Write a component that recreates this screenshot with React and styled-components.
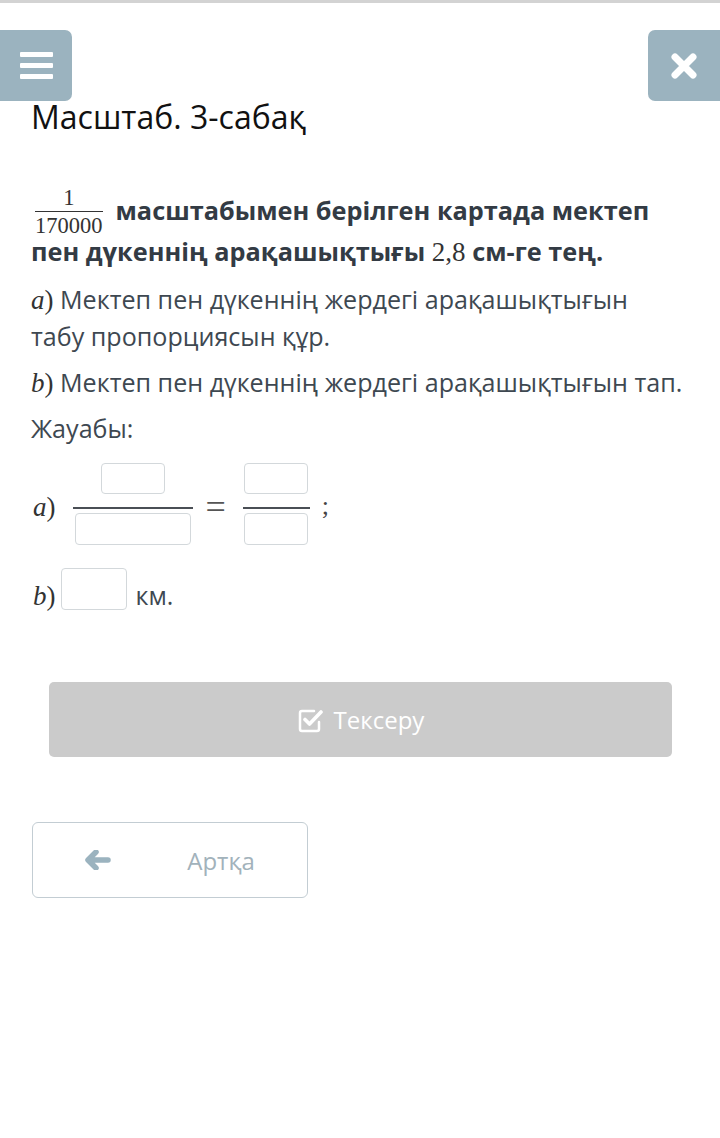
import React from 'react';
import styled, { createGlobalStyle } from 'styled-components';

const GlobalStyle = createGlobalStyle`
  body {
    margin: 0;
    padding: 0;
    background: #ffffff;
    font-family: 'Open Sans', 'Noto Sans', sans-serif;
  }

  *, *::before, *::after {
    box-sizing: border-box;
  }
`;

const Page = styled.div`
  min-height: 1138px;
  border-top: 3px solid #d3d3d3;
  background: #fff;
`;

const TopBar = styled.div`
  display: flex;
  justify-content: space-between;
  margin-top: 27px;
`;

const SideButton = styled.button`
  width: 72px;
  height: 71px;
  border: none;
  padding: 0;
  background: #9bb3bf;
  border-radius: ${p => (p.$side === 'left' ? '0 7px 7px 0' : '7px 0 0 7px')};
  display: flex;
  flex-direction: column;
  align-items: center;
  justify-content: center;
  gap: 6px;
`;

const MenuBar = styled.span`
  display: block;
  width: 33px;
  height: 5px;
  border-radius: 1px;
  background: #fff;
`;

const Content = styled.div`
  padding: 0 35px 0 31px;
`;

const Title = styled.h1`
  margin: 0;
  font-size: 32px;
  line-height: 1;
  font-weight: 400;
  color: #111;
`;

const Lead = styled.p`
  margin: 54px 0 0;
  font-size: 25.3px;
  line-height: 41px;
  font-weight: 700;
  color: #333b44;
`;

const Fraction = styled.span`
  display: inline-flex;
  flex-direction: column;
  align-items: stretch;
  text-align: center;
  vertical-align: 15px;
  margin: 0 13px -8px 4px;
  font-family: 'Liberation Serif', serif;
  font-weight: 400;
  font-size: 22.5px;
  line-height: 1;
  color: #333;
`;

const FracBar = styled.span`
  display: block;
  height: 1px;
  background: #333;
  margin: 1px 0 3px;
`;

const MathNum = styled.span`
  font-family: 'Liberation Serif', serif;
  font-weight: 400;
  font-size: 27px;
  line-height: 1;
  color: #333;
`;

const Text = styled.p`
  margin: 9px 0 0;
  font-size: 25.1px;
  line-height: 37px;
  color: #3e4851;
`;

const Label = styled.span`
  font-family: 'Liberation Serif', serif;
  font-size: 27px;
  line-height: 1;
  color: #333;

  i {
    font-style: italic;
  }
`;

const AnswerRow = styled.div`
  display: flex;
  align-items: center;
  margin-top: 16px;
  padding-left: 2px;
`;

const RowLabel = styled(Label)`
  margin-top: 6px;
  margin-right: ${p => p.$gap || 17}px;
`;

const FracInput = styled.div`
  display: flex;
  flex-direction: column;
  align-items: center;
  width: ${p => p.$width}px;
`;

const InputBox = styled.div`
  width: ${p => p.$w}px;
  height: ${p => p.$h}px;
  border: 1px solid #d3d8db;
  border-radius: 4px;
  background: #fff;
`;

const InputBar = styled.div`
  align-self: stretch;
  height: 2px;
  background: #4a4f55;
  margin: 13px 0 4px;
`;

const Equals = styled.span`
  margin: 6px 17px 0 13px;
  font-family: 'Liberation Serif', serif;
  font-size: 36px;
  line-height: 1;
  color: #555;
`;

const Semi = styled.span`
  margin: 4px 0 0 12px;
  font-family: 'Liberation Serif', serif;
  font-size: 26px;
  line-height: 1;
  color: #444;
`;

const BRow = styled.div`
  display: flex;
  align-items: flex-end;
  margin-top: 23px;
  padding-left: 2px;
`;

const Unit = styled.span`
  margin-left: 9px;
  font-size: 25px;
  line-height: 30px;
  color: #3e4851;
`;

const CheckButton = styled.button`
  display: flex;
  align-items: center;
  justify-content: center;
  gap: 11px;
  width: 623px;
  height: 75px;
  margin: 72px 0 0 18px;
  padding: 0;
  border: none;
  border-radius: 5px;
  background: #cbcbcb;
  color: #fff;
  font-family: 'Open Sans', sans-serif;
  font-size: 24px;
`;

const BackButton = styled.button`
  display: flex;
  align-items: center;
  width: 276px;
  height: 76px;
  margin: 65px 0 0 1px;
  padding: 0;
  border: 1px solid #c3cdd3;
  border-radius: 6px;
  background: #fff;
  font-family: 'Open Sans', sans-serif;
  font-size: 24px;
  color: #a2b2bb;
`;

const BackIcon = styled.span`
  display: flex;
  justify-content: center;
  width: 130px;
`;

const BackLabel = styled.span`
  width: 116px;
  text-align: center;
`;

const CheckIcon = () => (
  <svg width="26" height="26" viewBox="0 0 26 26" fill="none">
    <path
      d="M17 4H5a2 2 0 0 0-2 2v16a2 2 0 0 0 2 2h15a2 2 0 0 0 2-2v-7"
      stroke="#fff"
      strokeWidth="2.5"
      strokeLinecap="round"
    />
    <path
      d="M8 12.5l4.5 4.5L24 5"
      stroke="#fff"
      strokeWidth="3.6"
      strokeLinecap="round"
      strokeLinejoin="round"
    />
  </svg>
);

const ArrowIcon = () => (
  <svg width="26" height="20" viewBox="0 0 26 20">
    <path
      d="M11 2L3 10l8 8M4 10h19"
      stroke="#9bb3bf"
      strokeWidth="5.5"
      strokeLinecap="round"
      strokeLinejoin="round"
      fill="none"
    />
  </svg>
);

const CloseIcon = () => (
  <svg width="28" height="28" viewBox="0 0 28 28">
    <path d="M5 5l18 18M23 5L5 23" stroke="#fff" strokeWidth="7" strokeLinecap="round" />
  </svg>
);

const App = () => {
  return (
    <Page>
      <GlobalStyle />
      <TopBar>
        <SideButton $side="left" aria-label="menu">
          <MenuBar />
          <MenuBar />
          <MenuBar />
        </SideButton>
        <SideButton $side="right" aria-label="close">
          <CloseIcon />
        </SideButton>
      </TopBar>

      <Content>
        <Title>Масштаб. 3-сабақ</Title>

        <Lead>
          <Fraction>
            <span>1</span>
            <FracBar />
            <span>170000</span>
          </Fraction>
          масштабымен берілген картада мектеп пен дүкеннің арақашықтығы{' '}
          <MathNum>2,8</MathNum> см-ге тең.
        </Lead>

        <Text>
          <Label><i>a</i>)</Label> Мектеп пен дүкеннің жердегі арақашықтығын табу пропорциясын құр.
        </Text>
        <Text>
          <Label><i>b</i>)</Label> Мектеп пен дүкеннің жердегі арақашықтығын тап.
        </Text>
        <Text>Жауабы:</Text>

        <AnswerRow>
          <RowLabel><i>a</i>)</RowLabel>
          <FracInput $width={120}>
            <InputBox $w={64} $h={31} />
            <InputBar />
            <InputBox $w={116} $h={32} />
          </FracInput>
          <Equals>=</Equals>
          <FracInput $width={67}>
            <InputBox $w={64} $h={31} />
            <InputBar />
            <InputBox $w={64} $h={32} />
          </FracInput>
          <Semi>;</Semi>
        </AnswerRow>

        <BRow>
          <RowLabel $gap={5}><i>b</i>)</RowLabel>
          <InputBox $w={66} $h={42} />
          <Unit>км.</Unit>
        </BRow>

        <CheckButton>
          <CheckIcon />
          Тексеру
        </CheckButton>

        <BackButton>
          <BackIcon>
            <ArrowIcon />
          </BackIcon>
          <BackLabel>Артқа</BackLabel>
        </BackButton>
      </Content>
    </Page>
  );
};

export default App;
